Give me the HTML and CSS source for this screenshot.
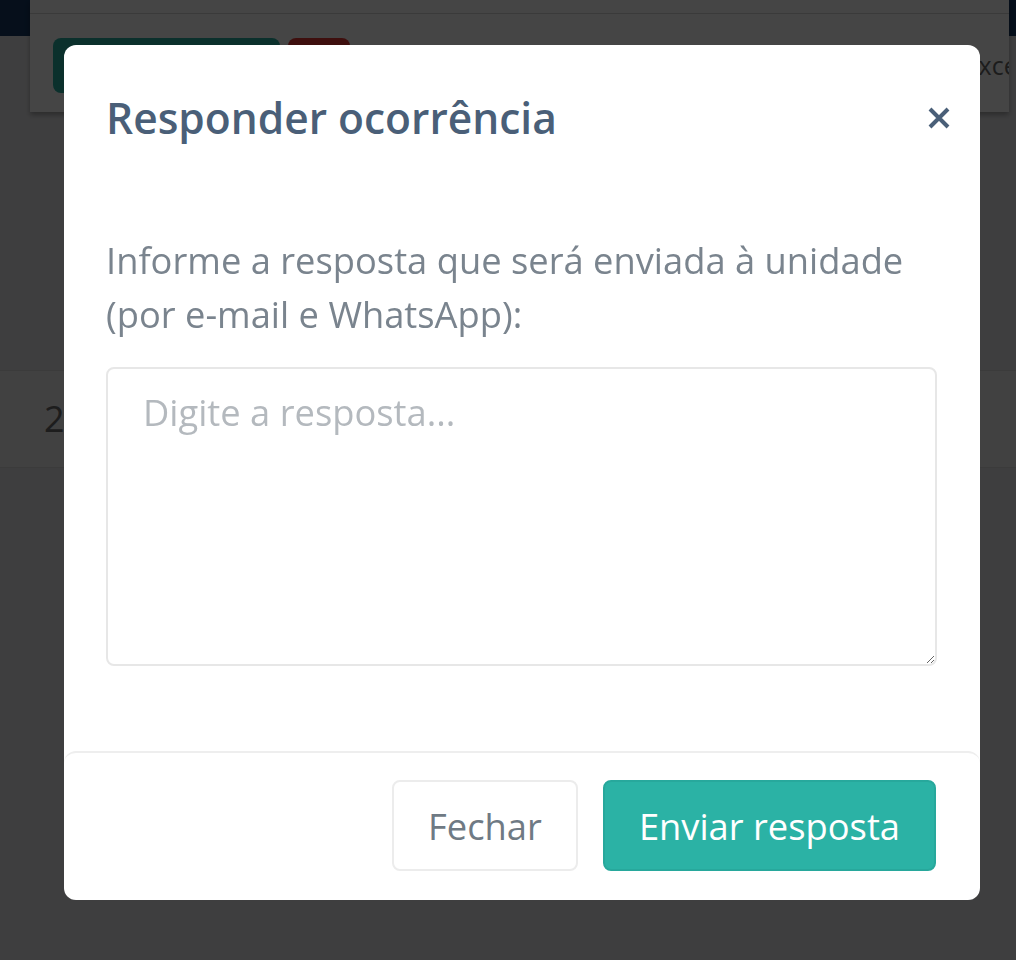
FILE: index.html
```html
<!DOCTYPE html>
<html lang="pt-BR">
<head>
<meta charset="utf-8">
<title>Responder ocorrência</title>
<link rel="stylesheet" href="styles.css">
</head>
<body>
<div class="page">
  <div class="nav"></div>
  <div class="content">
    <div class="card">
      <div class="card-top"></div>
      <div class="card-body">
        <span class="pbtn pbtn-green"></span>
        <span class="pbtn pbtn-red"></span>
        <span class="excel">Excel</span>
      </div>
    </div>
    <div class="list">
      <div class="list-row">2</div>
    </div>
  </div>
</div>

<div class="overlay">
  <div class="modal">
    <div class="modal-header">
      <h2 class="modal-title">Responder ocorrência</h2>
      <button class="close" aria-label="Fechar">
        <svg width="22" height="22" viewBox="0 0 22 22"><path d="M2 2 L20 20 M20 2 L2 20" stroke="#4a5f78" stroke-width="4" fill="none"/></svg>
      </button>
    </div>
    <div class="modal-body">
      <p class="label">Informe a resposta que será enviada à unidade (por e-mail e WhatsApp):</p>
      <textarea class="answer" placeholder="Digite a resposta..."></textarea>
    </div>
    <div class="modal-footer">
      <button class="btn btn-light">Fechar</button>
      <button class="btn btn-primary">Enviar resposta</button>
    </div>
  </div>
</div>
</body>
</html>
```
FILE: styles.css
```css
html, body {
  margin: 0;
  padding: 0;
}
body {
  background: #e6e6e9;
  font-family: "Open Sans", "Liberation Sans", sans-serif;
  overflow: hidden;
  height: 960px;
}
.nav {
  height: 36px;
  background: #163864;
}
.content {
  padding: 0 7px 0 30px;
}
.card {
  margin-top: -36px;
  background: #ffffff;
  overflow: hidden;
  box-shadow: 0 3px 5px rgba(0, 0, 0, 0.3);
}
.card-top {
  height: 13px;
  border-bottom: 1px solid #d6d6d6;
}
.card-body {
  display: flex;
  align-items: center;
  gap: 8px;
  padding: 24px 0 19px 23px;
}
.pbtn {
  display: block;
  height: 55px;
  border-radius: 8px;
}
.pbtn-green {
  width: 227px;
  background: #2bb0a4;
}
.pbtn-red {
  width: 62px;
  background: #e53935;
}
.excel {
  margin-left: auto;
  margin-right: -15px;
  font-size: 25px;
  color: #6a6a6a;
  line-height: 25px;
  white-space: nowrap;
}
.list {
  margin-top: 258px;
  margin-left: -30px;
  margin-right: -7px;
}
.list-row {
  height: 96px;
  border-top: 1px solid #d8d8db;
  border-bottom: 1px solid #d8d8db;
  background: #eeeef1;
  padding-left: 44px;
  font-size: 36px;
  line-height: 96px;
  color: #6b6b6b;
}

/* overlay + modal */
.overlay {
  position: fixed;
  inset: 0;
  background: rgba(0, 0, 0, 0.73);
}
.modal {
  margin: 45px 0 0 64px;
  width: 916px;
  background: #ffffff;
  border-radius: 12px;
  display: flex;
  flex-direction: column;
}
.modal-header {
  display: flex;
  align-items: center;
  justify-content: space-between;
  padding: 43px 30px 0 42px;
}
.modal-title {
  margin: 0;
  font-size: 42.5px;
  font-weight: 600;
  line-height: 60px;
  color: #4a5f78;
}
.close {
  border: 0;
  background: none;
  padding: 0;
  width: 22px;
  height: 22px;
  display: flex;
}
.modal-body {
  padding: 85px 43px 85px 42px;
  display: flex;
  flex-direction: column;
}
.label {
  margin: 0;
  font-size: 36.3px;
  line-height: 54px;
  color: #7a848e;
}
.answer {
  margin-top: 26px;
  height: 299px;
  box-sizing: border-box;
  border: 2px solid #e7e7e7;
  border-radius: 8px;
  padding: 16px 35px;
  font-family: "Open Sans", "Liberation Sans", sans-serif;
  font-size: 36.3px;
  line-height: 54px;
  color: #555;
  outline: none;
}
.answer::placeholder {
  color: #b4b9be;
}
.modal-footer {
  border-top: 2px solid #eeeeee;
  border-radius: 12px 12px 0 0;
  padding: 27px 44px 29px 42px;
  display: flex;
  justify-content: flex-end;
  gap: 25px;
}
.btn {
  height: 91px;
  box-sizing: border-box;
  border-radius: 8px;
  padding: 0 34px;
  font-family: "Open Sans", "Liberation Sans", sans-serif;
  font-size: 36.3px;
}
.btn-light {
  background: #ffffff;
  border: 2px solid #ececec;
  color: #6f7a84;
}
.btn-primary {
  background: #2bb2a5;
  border: 2px solid #27a89c;
  color: #ffffff;
}
```
